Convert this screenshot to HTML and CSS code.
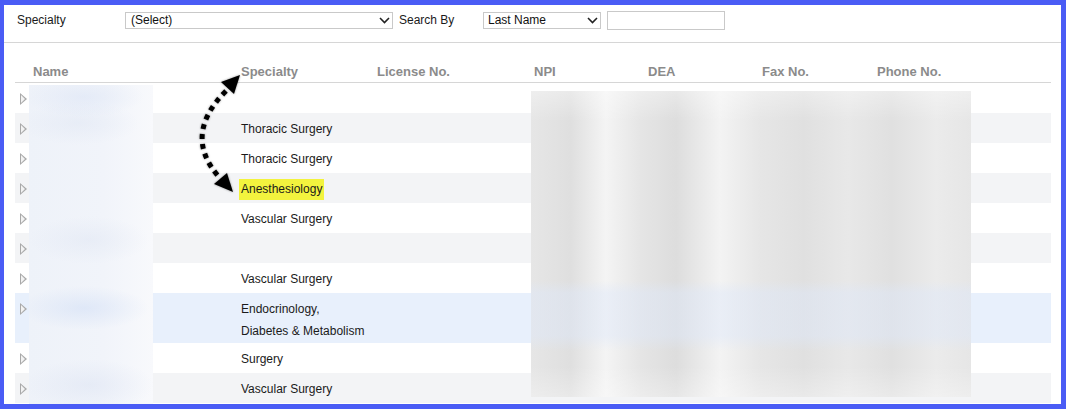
FILE: index.html
```html
<!DOCTYPE html>
<html>
	<head>
		<meta charset="UTF-8">
		<title>Providers</title>
		<link rel="stylesheet" href="styles.css">
	</head>

	<body>

		<div class="frame">

			<div class="filters">
				<span class="label label-specialty">Specialty</span>
				<div class="select select-specialty">
					<select><option>(Select)</option></select>
					<svg class="chev" width="11" height="7" viewBox="0 0 11 7"><path d="M1 1l4.5 4.5L10 1" fill="none" stroke="#222" stroke-width="1.6"/></svg>
				</div>
				<span class="label label-search">Search By</span>
				<div class="select select-by">
					<select><option>Last Name</option></select>
					<svg class="chev" width="11" height="7" viewBox="0 0 11 7"><path d="M1 1l4.5 4.5L10 1" fill="none" stroke="#222" stroke-width="1.6"/></svg>
				</div>
				<input class="search" type="text">
			</div>

			<div class="grid">
				<div class="row head">
					<div></div>
					<div>Name</div>
					<div>Specialty</div>
					<div>License No.</div>
					<div>NPI</div>
					<div>DEA</div>
					<div>Fax No.</div>
					<div>Phone No.</div>
				</div>

				<div class="row"><div class="exp"></div><div></div><div></div><div></div><div></div><div></div><div></div><div></div></div>
				<div class="row alt"><div class="exp"></div><div></div><div>Thoracic Surgery</div><div></div><div></div><div></div><div></div><div></div></div>
				<div class="row"><div class="exp"></div><div></div><div>Thoracic Surgery</div><div></div><div></div><div></div><div></div><div></div></div>
				<div class="row alt"><div class="exp"></div><div></div><div><span class="mark">Anesthesiology</span></div><div></div><div></div><div></div><div></div><div></div></div>
				<div class="row"><div class="exp"></div><div></div><div>Vascular Surgery</div><div></div><div></div><div></div><div></div><div></div></div>
				<div class="row alt"><div class="exp"></div><div></div><div></div><div></div><div></div><div></div><div></div><div></div></div>
				<div class="row"><div class="exp"></div><div></div><div>Vascular Surgery</div><div></div><div></div><div></div><div></div><div></div></div>
				<div class="row selected tall"><div class="exp"></div><div></div><div>Endocrinology,<br>Diabetes &amp; Metabolism</div><div></div><div></div><div></div><div></div><div></div></div>
				<div class="row"><div class="exp"></div><div></div><div>Surgery</div><div></div><div></div><div></div><div></div><div></div></div>
				<div class="row alt"><div class="exp"></div><div></div><div>Vascular Surgery</div><div></div><div></div><div></div><div></div><div></div></div>
			</div>

			<!-- redacted areas -->
			<div class="blur blur-names"></div>
			<div class="blur blur-data"></div>

			<!-- annotation -->
			<svg class="note" width="1066" height="409" viewBox="0 0 1066 409">
				<g class="note-arrow">
					<path d="M226 91 Q182 135 219 177" fill="none" stroke="#000" stroke-width="5" stroke-dasharray="5 5"/>
					<polygon points="240,75 234,94 221,82" fill="#000"/>
					<polygon points="233,192 227,173 214,184" fill="#000"/>
				</g>
			</svg>

		</div>

	</body>

</html>
```

FILE: styles.css
```css
* { margin: 0; padding: 0; box-sizing: border-box }

body {
	font-family: "Liberation Sans", Arial, sans-serif;
	font-size: 12px;
	color: #1a1a1a;
	background: #fff;
}

.frame {
	position: relative;
	height: 409px;
	border: solid #4a5cf5;
	border-width: 5px 5px 5px 4px;
	overflow: hidden;
}

/* filter bar */

.filters {
	display: flex;
	align-items: center;
	height: 38px;
	padding: 7px 0 13px 13px;
	border-bottom: 1px solid #d6d6d6;
}

.label { line-height: 17px }
.label-specialty { width: 108px }
.label-search { width: 84px; margin-left: 6px }

.select { position: relative; height: 17px }
.select select {
	appearance: none;
	-webkit-appearance: none;
	width: 100%;
	height: 17px;
	border: 1px solid #c9c9c9;
	background: #fff;
	font: inherit;
	color: #111;
	padding: 0 0 0 5px;
	outline: none;
}
.select .chev { position: absolute; right: 3px; top: 5px }
.select-specialty { width: 268px; margin-top: -1px }
.select-by { width: 118px; margin-top: -1px }
.select-by select { padding-left: 4px }

.search {
	width: 118px;
	height: 19px;
	margin-left: 6px;
	margin-top: -1px;
	border: 1px solid #c9c9c9;
	font: inherit;
}

/* table */

.grid { margin: 0 10px 0 11px }

.row {
	display: grid;
	grid-template-columns: 18px 208px 136px 157px 114px 114px 115px 1fr;
	padding: 5px 0 3px;
	line-height: 22px;
	height: 30px;
}
.row.tall { height: 50px; padding-bottom: 1px }
.row.alt { background: #f3f4f6 }
.row.selected { background: #e8f0fc }

.row.head {
	height: 40px;
	padding: 21px 0 2px;
	line-height: 16px;
	font-size: 13px;
	font-weight: bold;
	color: #8b8b8b;
	border-bottom: 1px solid #d6d6d6;
}

.exp { position: relative }
.exp::before {
	content: "";
	position: absolute;
	left: 5px;
	top: 5px;
	border-left: 7px solid #a9a9a9;
	border-top: 6px solid transparent;
	border-bottom: 6px solid transparent;
}
.exp::after {
	content: "";
	position: absolute;
	left: 6px;
	top: 7px;
	border-left: 4px solid #f2f2f2;
	border-top: 4px solid transparent;
	border-bottom: 4px solid transparent;
}

.mark {
	display: inline-block;
	background: #f3f33e;
	margin-left: -2px;
	padding: 0 2px;
	line-height: 21px;
}

/* redacted blocks */

.blur { position: absolute }

.blur-names {
	left: 25px;
	top: 80px;
	width: 124px;
	height: 320px;
	background:
		radial-gradient(ellipse 60px 20px at 55px 12px, rgba(214,224,244,.45), transparent),
		radial-gradient(ellipse 60px 22px at 50px 38px, rgba(216,224,240,.35), transparent),
		radial-gradient(ellipse 60px 24px at 60px 155px, rgba(216,224,240,.35), transparent),
		radial-gradient(ellipse 65px 22px at 55px 223px, rgba(206,220,245,.5), transparent),
		radial-gradient(ellipse 65px 26px at 60px 300px, rgba(214,222,240,.4), transparent),
		linear-gradient(to right, #eef2f9, #f1f4fa 60%, #f8f9fc);
}

.blur-data {
	left: 527px;
	top: 86px;
	width: 440px;
	height: 306px;
	background:
		linear-gradient(to bottom, transparent 62%, rgba(222,232,250,.45) 66%, rgba(222,232,250,.45) 80%, transparent 85%),
		linear-gradient(to bottom, rgba(255,255,255,.35), transparent 10%, transparent 90%, rgba(255,255,255,.3)),
		linear-gradient(to right, #e6e6e6 0%, #dfdfdf 9%, #f4f4f4 17%, #e5e5e5 25%, #dddddd 33%, #f3f3f3 43%, #e6e6e6 52%, #e0e0e0 62%, #e8e8e8 72%, #e0e0e0 82%, #ebebeb 92%, #e6e6e6 100%);
}

/* annotation */

.note {
	position: absolute;
	left: -4px;
	top: -5px;
	pointer-events: none;
}
.note-arrow { filter: drop-shadow(0 0 1px rgba(0,0,0,.4)) }
```
